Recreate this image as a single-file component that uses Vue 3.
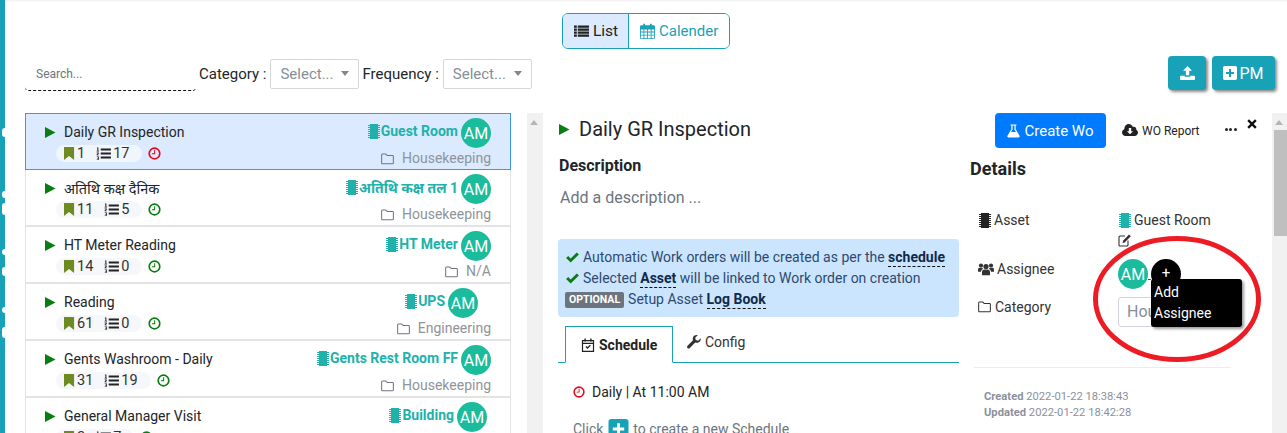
<script setup>
const rows = [
  { title: 'Daily GR Inspection', marks: 1, items: 17, late: true, asset: 'Guest Room', cat: 'Housekeeping', selected: true, shift: 0 },
  { title: 'अतिथि कक्ष दैनिक', marks: 11, items: 5, late: false, asset: 'अतिथि कक्ष तल 1', cat: 'Housekeeping', shift: 0, deva: true },
  { title: 'HT Meter Reading', marks: 14, items: 0, late: false, asset: 'HT Meter', cat: 'N/A', shift: 0 },
  { title: 'Reading', marks: 61, items: 0, late: false, asset: 'UPS', cat: 'Engineering', shift: 13 },
  { title: 'Gents Washroom - Daily', marks: 31, items: 19, late: false, asset: 'Gents Rest Room FF', cat: 'Housekeeping', shift: 0 },
  { title: 'General Manager Visit', marks: 2, items: 7, late: false, asset: 'Building', cat: 'Housekeeping', shift: 4 }
]
const bumps = [
  { top: 128, h: 9 }, { top: 191, h: 7 }, { top: 203, h: 12 }, { top: 249, h: 6 },
  { top: 267, h: 9 }, { top: 307, h: 6 }, { top: 327, h: 11 }
]
</script>

<template>
  <div class="page">
    <svg class="defs" width="0" height="0" aria-hidden="true">
      <symbol id="i-play" viewBox="0 0 12 12"><path d="M1 0.500 11.500 6 1 11.500Z" /></symbol>
      <symbol id="i-mark" viewBox="0 0 12 14"><path d="M0 0H11V14L5.500 9.800 0 14Z" /></symbol>
      <symbol id="i-ol" viewBox="0 0 16 14"><path d="M5 1.500H16V3.900H5ZM5 5.800H16V8.200H5ZM5 10.100H16V12.500H5ZM1 .5H2.500V4H3.200V4.800H.6V4H1.400V1.400H.8ZM.6 6H3V7L1.700 8.300H3.200V9H.6V8.200L2 6.800H.6ZM.6 10.200H3.200V13.800H.6V13.100H2.400V12.400H1V11.700H2.400V10.900H.6Z" /></symbol>
      <symbol id="i-clock" viewBox="0 0 14 14"><circle cx="7" cy="7" r="5.700" fill="none" stroke="currentColor" stroke-width="1.800" /><path d="M7.700 3.500V7.700H4.200V6.600H6.600V3.500Z" /></symbol>
      <symbol id="i-chip" viewBox="0 0 14 15"><path d="M3 0H11V15H3ZM1 1H3V2H1ZM1 3H3V4H1ZM1 5H3V6H1ZM1 7H3V8H1ZM1 9H3V10H1ZM1 11H3V12H1ZM1 13H3V14H1ZM11 1H13V2H11ZM11 3H13V4H11ZM11 5H13V6H11ZM11 7H13V8H11ZM11 9H13V10H11ZM11 11H13V12H11ZM11 13H13V14H11Z" /></symbol>
      <symbol id="i-folder" viewBox="0 0 14 12"><path d="M1.500 .7H5.200L6.700 2.300H12.500C13 2.300 13.300 2.700 13.300 3.100V10.300C13.300 10.800 13 11.200 12.500 11.200H1.500C1 11.200 .7 10.800 .7 10.300V1.500C.7 1.100 1 .7 1.500 .7Z" fill="none" stroke="currentColor" stroke-width="1.100" /></symbol>
      <symbol id="i-list" viewBox="0 0 16 14"><path d="M0 1H3V3.400H0ZM4 1H16V3.400H4ZM0 4.400H3V6.600H0ZM4 4.400H16V6.600H4ZM0 7.600H3V9.800H0ZM4 7.600H16V9.800H4ZM0 10.800H3V13H0ZM4 10.800H16V13H4Z" /></symbol>
      <symbol id="i-cal" viewBox="0 0 14 15"><path d="M1.200 2.200H3V.6H4.600V2.200H9.400V.6H11V2.200H12.800C13.400 2.200 14 2.700 14 3.400V13.800C14 14.500 13.400 15 12.800 15H1.200C.6 15 0 14.500 0 13.800V3.400C0 2.700 .6 2.200 1.200 2.200ZM.8 6V8H3.200V6ZM4 6V8H6.600V6ZM7.400 6V8H10V6ZM10.800 6V8H13.200V6ZM.8 8.800V11H3.200V8.800ZM4 8.800V11H6.600V8.800ZM7.400 8.800V11H10V8.800ZM10.800 8.800V11H13.200V8.800ZM.8 11.800V14.200H3.200V11.800ZM4 11.800V14.200H6.600V11.800ZM7.400 11.800V14.200H10V11.800ZM10.800 11.800V14.200H13.200V11.800Z" fill-rule="evenodd" /></symbol>
      <symbol id="i-upload" viewBox="0 0 16 15"><path d="M8 0 12.800 5H9.800V10H6.200V5H3.200ZM.8 10.500H5V11.600H11V10.500H15.200C15.600 10.500 16 10.900 16 11.300V14.200C16 14.600 15.600 15 15.200 15H.8C.4 15 0 14.600 0 14.200V11.300C0 10.900 .4 10.500 .8 10.500Z" /></symbol>
      <symbol id="i-plus-sq" viewBox="0 0 14 14"><path d="M1.800 0H12.200C13.200 0 14 .8 14 1.800V12.200C14 13.200 13.200 14 12.200 14H1.800C.8 14 0 13.200 0 12.200V1.800C0 .8 .8 0 1.800 0ZM6 3V6H3V8H6V11H8V8H11V6H8V3Z" fill-rule="evenodd" /></symbol>
      <symbol id="i-flask" viewBox="0 0 14 14"><path d="M3.800 0H10.200V1.200H9.300V5L13.500 12C14 13 13.400 14 12.300 14H1.700C.6 14 0 13 .5 12L4.700 5V1.200H3.800ZM6 1.200V5.400L4.400 8.200H9.600L8 5.400V1.200Z" fill-rule="evenodd" /></symbol>
      <symbol id="i-cloud" viewBox="0 0 16 13"><path d="M6.500 0C8.500 0 10.200 1.200 10.900 3 11.300 2.800 11.700 2.700 12 2.700 13.300 2.700 14.300 3.700 14.300 5 14.300 5.300 14.200 5.500 14.200 5.700 15.300 6.200 16 7.300 16 8.500 16 10.400 14.500 12 12.600 12H3.500C1.600 12 0 10.400 0 8.500 0 7 .9 5.700 2.300 5.200 2.300 2.300 4.200 0 6.500 0ZM6.800 4V7.300H4.900L8 10.300 11.100 7.300H9.200V4Z" fill-rule="evenodd" /></symbol>
      <symbol id="i-x" viewBox="0 0 10 10"><path d="M2 .3 5 3.300 8 .3 9.700 2 6.700 5 9.700 8 8 9.700 5 6.700 2 9.700 .3 8 3.300 5 .3 2Z" /></symbol>
      <symbol id="i-edit" viewBox="0 0 14 14"><path d="M10 7.500V12C10 12.600 9.600 13 9 13H2C1.400 13 1 12.600 1 12V4C1 3.400 1.400 3 2 3H7" fill="none" stroke="currentColor" stroke-width="1.100" /><path d="M5 7.800 11 1.500 12.800 3.300 6.700 9.500 4.600 10Z" /></symbol>
      <symbol id="i-users" viewBox="0 0 16 13"><circle cx="8" cy="4" r="2.600" /><circle cx="3" cy="3" r="2.100" /><circle cx="13" cy="3" r="2.100" /><path d="M4 12.800V9.500C4 8 5 7 6.300 7H9.700C11 7 12 8 12 9.500V12.800ZM0 9.200V7C0 5.900 .8 5.300 1.600 5.300H4.300C4.600 6 4.900 6.300 5.200 6.500 4 6.800 3.100 7.800 3 9.200ZM16 9.200V7C16 5.900 15.200 5.300 14.400 5.300H11.700C11.400 6 11.100 6.300 10.800 6.500 12 6.800 12.900 7.800 13 9.200Z" /></symbol>
      <symbol id="i-calcheck" viewBox="0 0 14 14"><path d="M1.500 2.600H12.500V13.300H1.500ZM1.500 5.400H12.500" fill="none" stroke="currentColor" stroke-width="1.200" /><path d="M3.400.6H4.800V3.400H3.400ZM9.200.6H10.600V3.400H9.200ZM4.500 9 5.400 8 6.500 9.100 9 6.700 9.900 7.600 6.500 11Z" /></symbol>
      <symbol id="i-wrench" viewBox="0 0 14 14"><path d="M13.700 3.200 11.200 5.700 8.800 5.100 8.200 2.700 10.700.2C8.900-.3 7 .4 6.200 2 5.600 3.100 5.600 4.300 6 5.300L.5 10.800C-.1 11.400-.1 12.400.5 13 1.100 13.700 2.200 13.700 2.800 13L8.300 7.600C9.400 8 10.600 7.900 11.700 7.300 13.300 6.500 14.100 4.900 13.700 3.200Z" /></symbol>
      <symbol id="i-check" viewBox="0 0 14 12"><path d="M0 6.500 2.300 4.300 5 7 11.700 .5 14 2.800 5 11.500Z" /></symbol>
    </svg>

    <aside class="strip">
      <i v-for="b in bumps" :key="b.top" class="bump" :style="{ top: b.top + 'px', height: b.h + 'px' }"></i>
    </aside>

    <main class="main">
      <div class="view-row">
        <div class="toggle">
          <button class="seg on"><svg class="ic seg-ic"><use href="#i-list" /></svg>List</button>
          <button class="seg"><svg class="ic seg-ic cal"><use href="#i-cal" /></svg>Calender</button>
        </div>
      </div>

      <div class="toolbar">
        <div class="search">Search...</div>
        <label class="flabel">Category :</label>
        <div class="select">Select...<i class="caret"></i></div>
        <label class="flabel">Frequency :</label>
        <div class="select">Select...<i class="caret"></i></div>
        <div class="actions">
          <button class="tbtn up"><svg class="ic"><use href="#i-upload" /></svg></button>
          <button class="tbtn pm"><svg class="ic"><use href="#i-plus-sq" /></svg>PM</button>
        </div>
      </div>

      <div class="content">
        <section class="list">
          <article v-for="r in rows" :key="r.title" class="row" :class="{ sel: r.selected }">
            <div class="row-left">
              <div class="row-title" :class="{ deva: r.deva }"><svg class="ic play"><use href="#i-play" /></svg><span>{{ r.title }}</span></div>
              <div class="row-meta">
                <span class="pill">
                  <svg class="ic mark"><use href="#i-mark" /></svg><span class="num">{{ r.marks }}</span>
                  <svg class="ic ol"><use href="#i-ol" /></svg><span class="num">{{ r.items }}</span>
                </span>
                <svg class="ic clock" :class="r.late ? 'red' : 'green'"><use href="#i-clock" /></svg>
              </div>
            </div>
            <div class="row-right">
              <div class="asset-line" :style="{ marginRight: r.shift + 'px' }">
                <svg class="ic chip"><use href="#i-chip" /></svg>
                <span class="asset">{{ r.asset }}</span>
                <span class="avatar">AM</span>
              </div>
              <div class="cat"><svg class="ic fold"><use href="#i-folder" /></svg>{{ r.cat }}</div>
            </div>
          </article>
        </section>

        <div class="track list-track"><i class="arrow"></i></div>

        <section class="panel">
          <div class="col-main">
            <h1 class="title"><svg class="ic play"><use href="#i-play" /></svg>Daily GR Inspection</h1>
            <h2 class="desc-h">Description</h2>
            <p class="desc">Add a description ...</p>
            <div class="alert">
              <div class="al"><svg class="ic chk"><use href="#i-check" /></svg>Automatic Work orders will be created as per the <b class="dash">schedule</b></div>
              <div class="al"><svg class="ic chk"><use href="#i-check" /></svg>Selected <b class="dash">Asset</b> will be linked to Work order on creation</div>
              <div class="al"><span class="badge">OPTIONAL</span>Setup Asset <b class="dash">Log Book</b></div>
            </div>
            <div class="tabs">
              <div class="tab active"><svg class="ic tab-ic"><use href="#i-calcheck" /></svg>Schedule</div>
              <div class="tab conf"><svg class="ic tab-ic"><use href="#i-wrench" /></svg>Config</div>
            </div>
            <div class="sched"><svg class="ic clock red"><use href="#i-clock" /></svg>Daily | At 11:00 AM</div>
            <div class="hint">Click <span class="plus"><svg class="ic"><use href="#i-plus-sq" /></svg></span> to create a new Schedule</div>
          </div>

          <div class="col-side">
            <div class="side-actions">
              <button class="create"><svg class="ic"><use href="#i-flask" /></svg>Create Wo</button>
              <span class="report"><svg class="ic"><use href="#i-cloud" /></svg>WO Report</span>
              <span class="dots"><i></i><i></i><i></i></span>
              <svg class="ic close"><use href="#i-x" /></svg>
            </div>
            <h2 class="det-h">Details</h2>
            <div class="det">
              <div class="lab"><svg class="ic d-chip"><use href="#i-chip" /></svg>Asset</div>
              <div class="val v-asset">
                <div><svg class="ic d-chip teal"><use href="#i-chip" /></svg>Guest Room</div>
                <svg class="ic edit"><use href="#i-edit" /></svg>
              </div>
              <div class="lab l-ass"><svg class="ic d-users"><use href="#i-users" /></svg>Assignee</div>
              <div class="val v-ass">
                <span class="avatar">AM</span>
                <i class="link"></i>
                <span class="avatar add">+</span>
              </div>
              <div class="lab l-cat"><svg class="ic d-fold"><use href="#i-folder" /></svg>Category</div>
              <div class="val"><div class="input">Hou</div></div>
            </div>
            <div class="tip">Add<br />Assignee</div>
            <hr class="rule" />
            <div class="stamps">
              <div><b>Created</b> 2022-01-22 18:38:43</div>
              <div><b>Updated</b> 2022-01-22 18:42:28</div>
            </div>
            <svg class="ring" width="168" height="126" viewBox="0 0 168 126"><ellipse cx="84" cy="63" rx="81.500" ry="60.500" fill="none" stroke="#ed1c24" stroke-width="5" /></svg>
          </div>

          <div class="track side-track"><i class="arrow"></i><i class="thumb"></i></div>
        </section>
      </div>
    </main>
  </div>
</template>

<style>
html, body { margin: 0; overflow: hidden; background: #fff; }
</style>

<style scoped>
.page {
  width: 1287px; height: 433px; display: flex; overflow: hidden; position: relative;
  font-family: Roboto, "Noto Sans", "Noto Sans CJK SC", sans-serif; color: #212529; font-size: 14px;
  box-shadow: inset 0 2px 2px -1px #eee;
}
.defs { position: absolute; }
.ic { fill: currentColor; display: inline-block; flex: none; }
.strip { width: 5px; flex: none; background: #17a2b8; position: relative; }
.bump { position: absolute; left: 2px; width: 3px; background: #fff; border-radius: 3px 0 0 3px; }
.main { flex: 1; min-width: 0; display: flex; flex-direction: column; }
.view-row { height: 55px; padding-top: 13px; box-sizing: border-box; padding-left: 557px; flex: none; }
.toggle { display: inline-flex; height: 36px; width: 168px; box-sizing: border-box; border: 1px solid #17a2b8; border-radius: 6px; overflow: hidden; }
.seg { border: 0; background: #fff; color: #17a2b8; font: 15px Roboto, sans-serif; display: flex; align-items: center; padding: 0 11px; }
.seg.on { background: #dbeafe; color: #222; width: 66px; border-right: 1px solid #17a2b8; font-size: 15.500px; }
.seg-ic { width: 15px; height: 14px; margin-right: 4px; }
.seg-ic.cal { width: 15px; height: 16px; }
.toolbar { height: 58px; flex: none; display: flex; align-items: flex-start; padding-left: 20px; box-sizing: border-box; }
.search { width: 171px; height: 36px; padding: 11px 0 0 11px; box-sizing: border-box; font-size: 12px; color: #6c757d; border-bottom: 1px dashed #111; border-radius: 0 0 4px 4px; margin-right: 3px; line-height: 16px; }
.flabel { font-size: 15px; line-height: 20px; margin-top: 9px; }
.select { position: relative; height: 30px; width: 89px; margin: 4px 3px 0 4px; box-sizing: border-box; border: 1px solid #d6d6d6; border-radius: 2px; padding: 0 0 0 9px; color: #868e96; font-size: 15px; line-height: 29px; }
.caret { position: absolute; right: 9px; top: 11px; width: 0; height: 0; border: 4px solid transparent; border-top: 5px solid #868686; border-bottom: 0; }
.actions { margin-left: auto; display: flex; gap: 6px; margin-right: 12px; margin-top: 1px; }
.tbtn { height: 34px; border: 0; background: #17a2b8; color: #fff; border-radius: 4px; box-shadow: 2px 2px 3px rgba(0,0,0,.45); display: flex; align-items: center; justify-content: center; }
.tbtn.up { width: 38px; }
.tbtn.up .ic { width: 15px; height: 14px; }
.tbtn.pm { width: 63px; font: 16px Roboto, sans-serif; }
.tbtn.pm .ic { width: 14px; height: 14px; margin-right: 2px; }
.content { flex: 1; min-height: 0; display: flex; padding-left: 20px; overflow: hidden; }
.list { width: 486px; flex: none; }
.row { height: 57px; box-sizing: border-box; border: 1px solid #e3e3e3; border-bottom-width: 2px; border-top-width: 0; display: flex; justify-content: space-between; padding: 4px 19px 0 18px; background: #fff; }
.row.sel { height: 57px; background: #dbeafe; border: 1px solid #3b97ea; }
.row-title { display: flex; align-items: center; height: 22px; margin-top: 3px; font-size: 14px; color: #212529; }
.row-title.deva { font-size: 14.500px; }
.row-title .play { width: 12px; height: 13px; color: #0a7d12; margin-right: 8px; }
.row-meta { display: flex; align-items: center; margin: 2px 0 0 12px; }
.pill { display: inline-flex; align-items: center; height: 17px; background: #f5f7fa; border-radius: 9px; padding: 0 13px 0 8px; font-size: 14.500px; color: #333; }
.sel .pill { background: #f1f6fd; }
.mark { width: 11px; height: 13px; color: #6f8a21; margin-right: 2px; }
.ol { width: 15px; height: 13px; color: #222; margin: 0 2px 0 11px; }
.clock { width: 13px; height: 13px; margin-left: 6px; }
.clock.red { color: #e8071c; }
.clock.green { color: #0a7d12; }
.row-right { display: flex; flex-direction: column; align-items: flex-end; }
.asset-line { display: flex; align-items: center; height: 30px; }
.chip { width: 14px; height: 15px; color: #20b2aa; margin: 0 0 4px; }
.asset { font-weight: 700; font-size: 14px; color: #20b2aa; margin: 0 3px 4px 0; }
.avatar { width: 30px; height: 30px; border-radius: 50%; background: #1abc9c; color: #fff; font-size: 16px; display: inline-flex; align-items: center; justify-content: center; flex: none; }
.cat { margin-top: 2px; font-size: 14px; color: #8f949a; line-height: 17px; display: flex; align-items: center; }
.fold { width: 13px; height: 12px; color: #7a6f86; margin-right: 8px; }
.track { flex: none; background: #f1f1f1; position: relative; }
.list-track { width: 16px; margin-left: 16px; }
.arrow { position: absolute; left: 3px; top: 7px; width: 0; height: 0; border: 4px solid transparent; border-bottom: 5px solid #b5b5b5; border-top: 0; }
.panel { flex: 1; min-width: 0; display: flex; padding-left: 15px; }
.col-main { width: 401px; flex: none; }
.title { margin: 4px 0 0; font-size: 20px; font-weight: 400; display: flex; align-items: center; height: 24px; color: #212529; }
.title .play { width: 12px; height: 13px; color: #0a7d12; margin-right: 9px; }
.desc-h { margin: 15px 0 0 1px; font-size: 16px; font-weight: 700; line-height: 19px; color: #212529; }
.desc { margin: 13px 0 0 2px; font-size: 16px; line-height: 20px; color: #6c757d; }
.alert { margin-top: 31px; background: #cce5ff; border-radius: 4px; color: #2d4a6e; padding: 8px 7px 0; height: 78px; box-sizing: border-box; font-size: 14px; }
.al { height: 21px; line-height: 21px; white-space: pre; display: flex; align-items: center; }
.al b { color: #0f2a4a; }
.chk { width: 13px; height: 11px; color: #0a7d12; margin: 0 4px 0 1px; }
.dash { border-bottom: 1px dashed #111; line-height: 17px; }
.badge { background: #6c757d; color: #fff; font-size: 10.500px; font-weight: 700; border-radius: 2px; height: 16px; line-height: 16px; padding: 0 4px; margin-right: 4px; }
.tabs { margin-top: 9px; display: flex; height: 37px; box-sizing: border-box; border-bottom: 1px solid #17a2b8; padding-left: 7px; }
.tab { display: flex; align-items: center; font-size: 14px; padding: 0 15px; height: 36px; color: #333; }
.tab.conf { height: 32px; padding-left: 14px; }
.tab.active { width: 108px; box-sizing: border-box; height: 37px; border: 1px solid #17a2b8; border-bottom: 1px solid #fff; font-weight: 700; padding: 0 0 0 15px; background: #fff; color: #222; }
.tab-ic { width: 14px; height: 14px; margin-right: 4px; }
.sched { display: flex; align-items: center; margin: 20px 0 0 15px; font-size: 14px; height: 18px; }
.sched .clock { width: 12px; height: 12px; margin: 0 7px 0 0; }
.hint { margin: 18px 0 0 15px; color: #6c757d; font-size: 14px; display: flex; align-items: center; height: 20px; white-space: pre; }
.plus { color: #17a2b8; width: 23px; height: 20px; display: inline-flex; }
.plus .ic { width: 23px; height: 20px; }
.col-side { width: 302px; margin-left: 11px; flex: none; position: relative; }
.side-actions { display: flex; align-items: flex-start; margin-left: 25px; height: 35px; }
.create { width: 111px; height: 35px; border: 0; background: #007bff; color: #fff; border-radius: 4px; font: 15px Roboto, sans-serif; display: flex; align-items: center; justify-content: center; }
.create .ic { width: 13px; height: 14px; margin-right: 4px; }
.report { display: flex; align-items: center; height: 35px; font-size: 12px; margin-left: 16px; color: #222; }
.report .ic { width: 16px; height: 13px; margin-right: 4px; }
.dots { display: flex; gap: 1.500px; margin: 15px 0 0 25px; }
.dots i { width: 3px; height: 3px; background: #222; border-radius: 50%; }
.close { width: 10px; height: 10px; margin: 6px 0 0 10px; color: #111; }
.det-h { margin: 11px 0 0; font-size: 18px; line-height: 20px; font-weight: 700; color: #212529; }
.det { margin: 32px 0 0 8px; display: grid; grid-template-columns: 140px 1fr; }
.lab { display: flex; align-items: center; height: 18px; font-size: 14px; color: #333; }
.val { font-size: 14px; color: #333; }
.v-asset { height: 48px; line-height: 18px; }
.v-asset > div { display: flex; align-items: center; height: 18px; }
.d-chip { width: 14px; height: 15px; color: #222; margin-right: 2px; }
.d-chip.teal { color: #20b2aa; }
.edit { width: 14px; height: 14px; display: block; margin-top: 4px; color: #333; }
.l-ass { height: 20px; }
.d-users { width: 16px; height: 14px; color: #333; margin-right: 3px; }
.v-ass { display: flex; height: 38px; }
.link { width: 3px; height: 21px; border-bottom: 1px solid #1a56c4; box-sizing: border-box; flex: none; }
.add { background: #000; font-size: 15px; align-items: flex-start; padding-top: 5px; box-sizing: border-box; }
.l-cat { height: 20px; }
.d-fold { width: 13px; height: 12px; margin-right: 4px; color: #333; }
.input { width: 114px; height: 30px; box-sizing: border-box; border: 1px solid #ced4da; border-radius: 3px; color: #868e96; font-size: 16px; line-height: 28px; padding-left: 8px; overflow: hidden; white-space: nowrap; }
.tip { position: absolute; left: 181px; top: 166px; width: 91px; height: 48px; box-sizing: border-box; background: #000; color: #fff; border-radius: 3px; padding: 3px 3px; font-size: 14px; line-height: 21px; box-shadow: 2px 2px 3px rgba(0,0,0,.4); }
.rule { margin: 40px 0 0 4px; width: 257px; border: 0; border-top: 1px solid #ececec; }
.stamps { margin: 21px 0 0 14px; font-size: 11.200px; line-height: 16px; color: #8b919c; }
.ring { position: absolute; left: 123px; top: 123px; }
.side-track { width: 15px; position: relative; }
.thumb { position: absolute; left: 2px; top: 17px; width: 13px; height: 106px; background: #bfbfbf; }
</style>
